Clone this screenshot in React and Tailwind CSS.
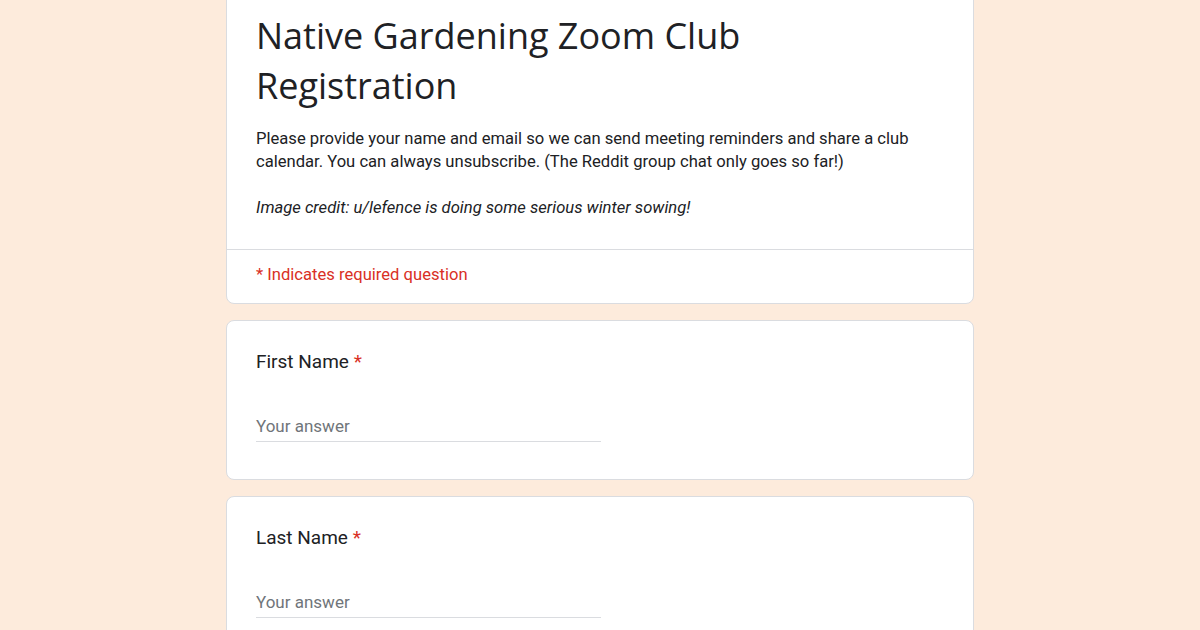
export default function App() {
  const body = { fontFamily: "Roboto, 'Liberation Sans', sans-serif" };
  const title = { fontFamily: "'Open Sans', Roboto, sans-serif" };
  return (
    <div className="w-[1200px] h-[630px] overflow-hidden bg-[#fdebdc]" style={body}>
      <div className="mx-auto w-[748px] flex flex-col gap-4 mt-[-12px]">
        <div className="bg-white border border-[#dadce0] rounded-lg">
          <div className="px-[29px] pt-[22px] pb-[30px]">
            <h1 className="max-w-[600px] text-[36px] leading-[50px] text-[#202124]" style={title}>
              Native Gardening Zoom Club Registration
            </h1>
            <p className="mt-[16px] text-[16.6px] leading-[23px] text-[#202124] pr-[20px]">
              Please provide your name and email so we can send meeting reminders and share a club calendar. You can always unsubscribe. (The Reddit group chat only goes so far!)
            </p>
            <p className="mt-[23px] text-[16.6px] leading-[23px] text-[#202124] italic">
              Image credit: u/lefence is doing some serious winter sowing!
            </p>
          </div>
          <div className="border-t border-[#dadce0] px-[29px] pt-[13px] pb-[17px] text-[16.6px] leading-[23px] text-[#d93025]">
            * Indicates required question
          </div>
        </div>
        {["First Name", "Last Name"].map((l) => (
          <div key={l} className="bg-white border border-[#dadce0] rounded-lg px-[29px] pt-[29px] pb-[37px]">
            <div className="text-[19px] leading-[24px] text-[#202124]">
              {l} <span className="text-[#d93025]">*</span>
            </div>
            <div className="mt-[42px] w-[345px] border-b border-[#dadce0] pb-[5px] text-[17px] leading-[20px] text-[#70757a]">
              Your answer
            </div>
          </div>
        ))}
      </div>
    </div>
  );
}
